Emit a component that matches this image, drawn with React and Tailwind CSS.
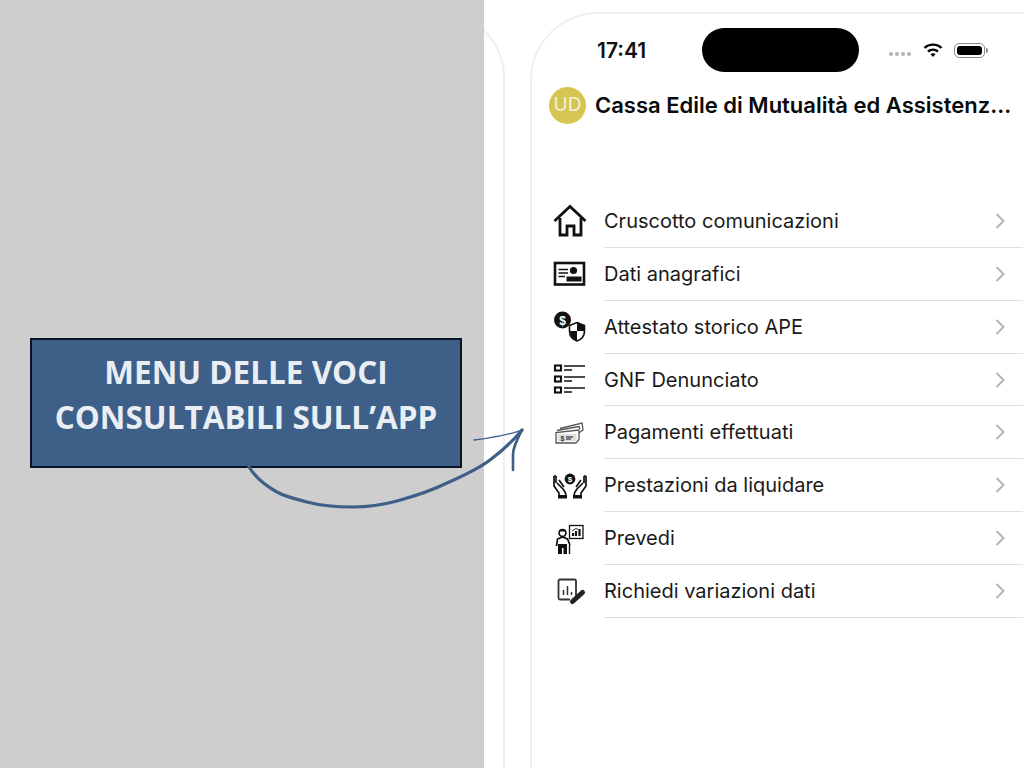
const Svg = ({ children }) => (
  <svg viewBox="0 0 36 36" className="w-9 h-9 shrink-0" fill="none" stroke="#111" strokeWidth="1.7">{children}</svg>
);

const icons = [
  <Svg key="home">
    <path d="M2.5 18 18 3.5 33.5 18" strokeWidth="2.8" />
    <path d="M8 15V32H15V23H22V32H29V15" strokeWidth="2.8" />
  </Svg>,
  <Svg key="id">
    <rect x="3" y="7" width="29" height="21.5" strokeWidth="2.6" />
    <path d="M6.5 13.5H16M6.5 17H16M6.5 20.5H13" strokeWidth="1.6" />
    <circle cx="21.5" cy="14.5" r="3.6" fill="#111" stroke="none" />
    <rect x="14.5" y="20.5" width="15" height="5" fill="#111" stroke="none" />
  </Svg>,
  <Svg key="shield">
    <circle cx="10.5" cy="11" r="8.5" fill="#111" stroke="none" />
    <text x="10.5" y="15.5" textAnchor="middle" fontSize="12" fontWeight="700" fill="#fff" stroke="none" fontFamily="Liberation Sans, sans-serif">$</text>
    <path d="M25 13.5 32.5 16.5V22C32.5 27 29 30.5 25 32 21 30.5 17.5 27 17.5 22V16.5Z" fill="#fff" strokeWidth="1.6" />
    <path d="M25 13.5 32.5 16.5V22H25ZM25 22H18C18.5 27 21 30.5 25 32Z" fill="#111" stroke="none" />
  </Svg>,
  <Svg key="list">
    <path d="M12 4H33M12 15H33M12 26H33" strokeWidth="1.6" />
    <path d="M12 8H20M12 19H20M12 30H20" strokeWidth="1.6" />
    <rect x="3" y="3.5" width="6" height="5" strokeWidth="2.1" />
    <rect x="3" y="14.5" width="6" height="5" strokeWidth="2.1" />
    <rect x="3" y="25.5" width="6" height="5" strokeWidth="2.1" />
  </Svg>,
  <Svg key="cash">
    <g stroke="#555" strokeWidth="1.3">
      <path d="M8 13.5 30 8 31 15 27 18" />
      <path d="M5 15.5 27 11.5 28 14" />
      <path d="M4 28V17.5L27 15V24.5L24 28Z" fill="#fff" />
      <rect x="5.5" y="19" width="19" height="7.5" fill="#e0e0e0" stroke="none" />
      <path d="M14 22H21M14 24H19" />
    </g>
    <text x="8.5" y="26" fontSize="7" fontWeight="700" fill="#333" stroke="none" fontFamily="Liberation Sans, sans-serif">$</text>
  </Svg>,
  <Svg key="hands">
    <circle cx="18" cy="11" r="5.4" fill="#111" stroke="none" />
    <text x="18" y="14" textAnchor="middle" fontSize="8" fontWeight="700" fill="#fff" stroke="none" fontFamily="Liberation Sans, sans-serif">$</text>
    <path d="M2 8V18L7 25V27M4 8V15M2 8H4M5 15 11 21 13 24 14 27M7 12 12 19" />
    <path d="M34 8V18L29 25V27M32 8V15M34 8H32M31 15 25 21 23 24 22 27M29 12 24 19" />
    <rect x="6" y="27" width="9" height="3.5" fill="#111" stroke="none" />
    <rect x="21" y="27" width="9" height="3.5" fill="#111" stroke="none" />
  </Svg>,
  <Svg key="person">
    <circle cx="10.5" cy="12" r="3.4" fill="#fff" />
    <path d="M6.5 10.5C6.5 7 14.5 7 14.5 10.5Z" fill="#111" stroke="none" />
    <path d="M4.5 25 5.5 18 10.5 16 15.5 18 18 24" fill="#fff" strokeWidth="1.7" />
    <path d="M6 23H15V33H11.5V27H10V33H6Z" fill="#111" stroke="none" />
    <path d="M17.5 24V33" strokeWidth="1.4" />
    <rect x="17.5" y="4.5" width="13.5" height="13" fill="#fff" strokeWidth="1.3" />
    <path d="M21 15V12M24 15V10M27.5 15V8" strokeWidth="2.2" />
    <path d="M20 10 24 7.5 26 8.5" strokeWidth="0.9" />
  </Svg>,
  <Svg key="edit">
    <path d="M24 24V8C24 7 23.5 6.5 22.5 6.5H8C7 6.5 6.5 7 6.5 8V25C6.5 26 7 26.5 8 26.5H18" stroke="#333" strokeWidth="1.8" />
    <path d="M11.5 22V17M15.5 22V13M19.5 22V19" stroke="#333" strokeWidth="1.5" />
    <path d="M30.5 19.5 20.5 28.5" stroke="#222" strokeWidth="5" strokeLinecap="round" />
  </Svg>,
];

const items = [
  "Cruscotto comunicazioni",
  "Dati anagrafici",
  "Attestato storico APE",
  "GNF Denunciato",
  "Pagamenti effettuati",
  "Prestazioni da liquidare",
  "Prevedi",
  "Richiedi variazioni dati",
];

export default function App() {
  return (
    <div className="relative w-[1024px] h-[768px] flex overflow-hidden bg-white font-['Inter',sans-serif]">
      <div className="w-[484px] h-full bg-[#cecece] shrink-0 flex items-start z-10">
        <div className="mt-[338px] ml-[30px] w-[432px] h-[130px] bg-[#3e5f88] border-2 border-[#0c1326] flex flex-col items-center pt-[9px] font-['Open_Sans',sans-serif] font-bold text-[31.5px] leading-[45px] text-[#e9eef4]">
          <div>MENU DELLE VOCI</div>
          <div>CONSULTABILI SULL’APP</div>
        </div>
      </div>

      <div className="flex-1 flex overflow-hidden">
        <div className="w-[85px] -ml-[64px] mt-[12px] shrink-0 rounded-tr-[65px] border-t-2 border-r-2 border-[#efefef]" />
        <div className="ml-[25px] mt-[12px] w-[493px] shrink-0 border-t-2 border-l-2 border-[#efefef] rounded-tl-[68px] flex flex-col">
          <div className="flex items-center pt-[14px] pl-[65px]">
            <div className="w-[105px] text-[21px] font-semibold text-[#111] mt-[1px]">17:41</div>
            <div className="w-[157px] h-[44px] bg-black rounded-full" />
            <div className="flex items-center ml-[30px]">
              <div className="flex gap-[2px] mt-[8px]">
                <span className="w-[4px] h-[4px] rounded-full bg-[#b5b5b5]" />
                <span className="w-[4px] h-[4px] rounded-full bg-[#b5b5b5]" />
                <span className="w-[4px] h-[4px] rounded-full bg-[#b5b5b5]" />
                <span className="w-[4px] h-[4px] rounded-full bg-[#b5b5b5]" />
              </div>
              <svg viewBox="0 0 20 16" className="w-[20px] h-[16px] ml-[12px]" fill="none" stroke="#000" strokeWidth="2.4">
                <path d="M1.5 6C6 1.5 14 1.5 18.5 6" />
                <path d="M5 9.5C8 7 12 7 15 9.5" />
                <path d="M10 15 7.5 12C9 11 11 11 12.5 12Z" fill="#000" stroke="none" />
              </svg>
              <div className="ml-[11px] w-[31px] h-[15px] rounded-[5px] border border-[#8a8a8a] p-[2px]">
                <div className="w-full h-full rounded-[3px] bg-black" />
              </div>
              <div className="w-[2px] h-[5px] bg-[#8a8a8a] rounded-r-sm ml-[1px]" />
            </div>
          </div>

          <div className="flex items-center mt-[15px] pl-[17px]">
            <div className="w-[37px] h-[37px] rounded-full bg-[#d5c553] flex items-center justify-center text-[19px] text-[#f4f1d8] shrink-0">UD</div>
            <div className="ml-[9px] text-[22px] font-semibold text-[#0a0a0a] whitespace-nowrap">Cassa Edile di Mutualità ed Assistenz...</div>
          </div>

          <div className="mt-[71px] flex flex-col">
            {items.map((label, i) => (
              <div key={label} className="flex items-center pl-[20px] h-[52.86px]">
                {icons[i]}
                <div className="ml-[16px] flex-1 h-full flex items-center border-b border-[#dedede] text-[20px] text-[#1a1a1a] pr-[18px]">
                  <span className="flex-1">{label}</span>
                  <svg viewBox="0 0 10 16" className="w-[10px] h-[16px]" fill="none" stroke="#b4b4b4" strokeWidth="2">
                    <path d="M1.5 1 8.5 8 1.5 15" />
                  </svg>
                </div>
              </div>
            ))}
          </div>
        </div>
      </div>

      <svg viewBox="0 0 1024 768" className="absolute inset-0 w-[1024px] h-[768px] pointer-events-none z-20" fill="none" stroke="#3e5f88" strokeLinecap="round">
        <path d="M249 467C256 478 266 486 277 492 286 497 296 499 307 502 322 506 338 507 353 507 368 507 382 505 397 501 415 496 431 491 447 483 463 476 478 469 490 460 502 451 513 441 522 430" strokeWidth="3.2" />
        <path d="M474 440C490 438 508 435 522 430" strokeWidth="1.3" strokeDasharray="14 1 30 1" />
        <path d="M522 430C517 440 513 447 513 455 513 460 513 465 513 470" strokeWidth="2.6" />
      </svg>
    </div>
  );
}
